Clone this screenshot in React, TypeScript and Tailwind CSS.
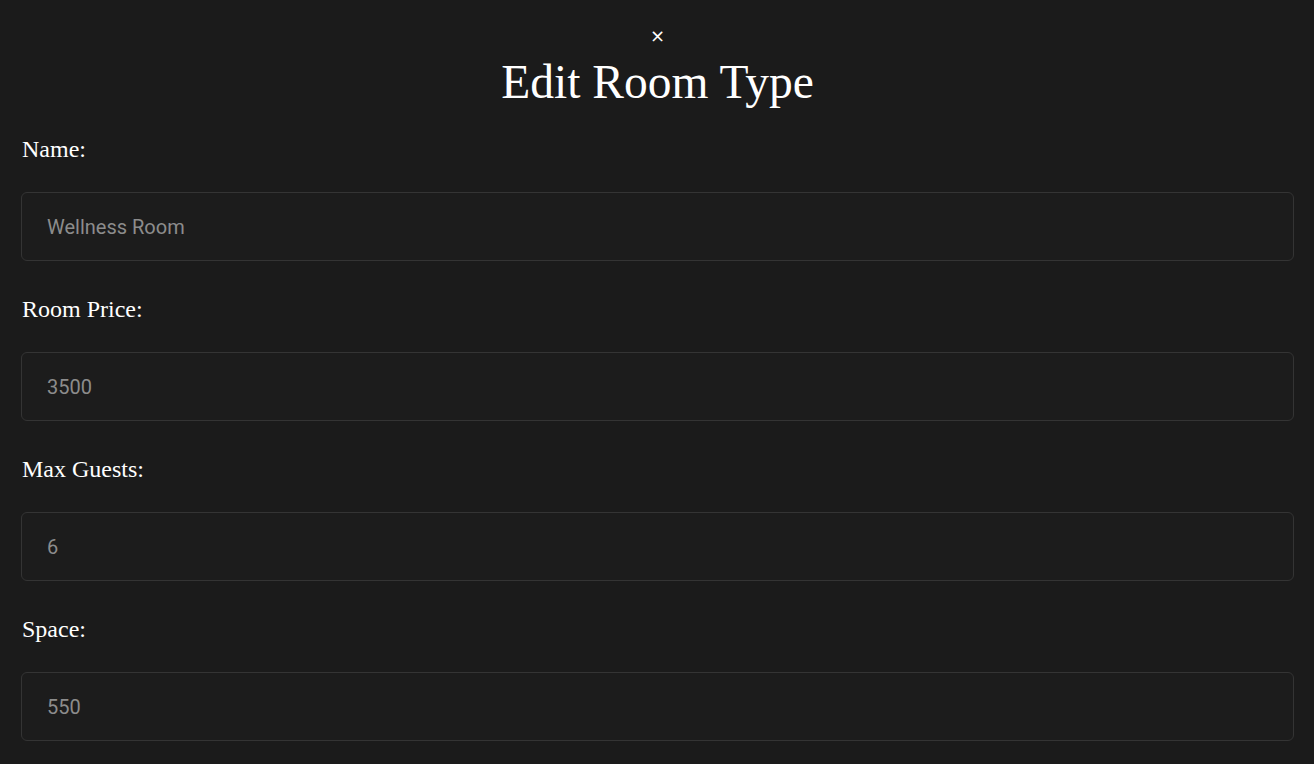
import React from "react";

const fields = [
  { label: "Name:", value: "Wellness Room" },
  { label: "Room Price:", value: "3500" },
  { label: "Max Guests:", value: "6" },
  { label: "Space:", value: "550" },
];

export default function App() {
  return (
    <div className="min-h-[764px] w-full bg-[#1b1b1b] pl-[21px] pr-[20px] pt-[26px] text-white">
      <div className="flex h-[20px] items-center justify-center">
        <span className="text-[18px] leading-none text-white" style={{ fontFamily: '"DejaVu Sans", sans-serif' }}>×</span>
      </div>
      <h1
        className="mt-[8px] h-[56px] text-center text-[47.5px] leading-[56px] font-normal"
        style={{ fontFamily: '"Liberation Serif", serif' }}
      >
        Edit Room Type
      </h1>
      <div className="mt-[21px] flex flex-col">
        {fields.map((f, i) => (
          <div key={f.label} className={i === 0 ? "" : "mt-[30px]"}>
            <label
              className="block h-[36px] pl-[1px] text-[24px] leading-[36px]"
              style={{ fontFamily: '"Liberation Serif", serif' }}
            >
              {f.label}
            </label>
            <div className="mt-[25px] flex h-[69px] items-center rounded-[6px] border border-[#343434] bg-[#1c1c1c] pl-[25px]">
              <span className="text-[20px] text-[#8c8c8c]" style={{ fontFamily: 'Roboto, sans-serif' }}>
                {f.value}
              </span>
            </div>
          </div>
        ))}
      </div>
    </div>
  );
}
